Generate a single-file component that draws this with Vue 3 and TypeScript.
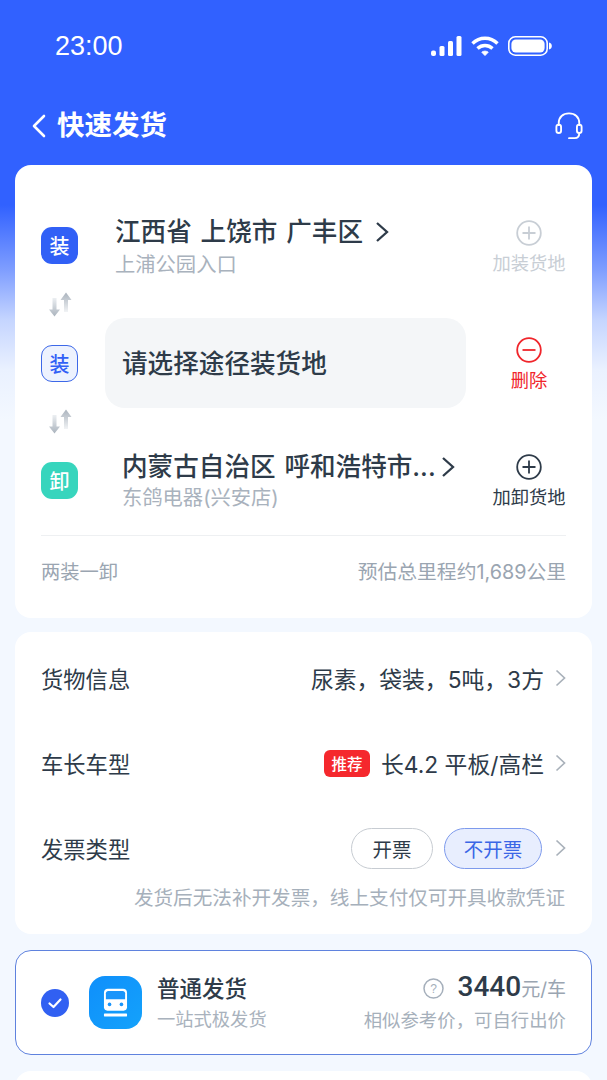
<script setup lang="ts">
interface InfoRow {
  label: string;
  value: string;
  tag?: string;
}

const infoRows: InfoRow[] = [
  { label: '货物信息', value: '尿素，袋装，5吨，3方' },
  { label: '车长车型', value: '长4.2 平板/高栏', tag: '推荐' }
];
</script>

<template>
  <div class="page">
    <div class="status-bar">
      <span class="time">23:00</span>
      <div class="status-icons">
        <svg width="31" height="20" viewBox="0 0 31 20" fill="#fff">
          <rect x="0" y="14.500" width="5" height="5.500" rx="2" />
          <rect x="8.500" y="10" width="5" height="10" rx="1.500" />
          <rect x="17" y="5" width="5" height="15" rx="1.500" />
          <rect x="25.500" y="0" width="5" height="20" rx="1.500" />
        </svg>
        <svg width="28" height="20" viewBox="0 0 28 20" fill="none" stroke="#fff" stroke-width="3.400">
          <path d="M1.500 7.500C8.500 0.500 19.500 0.500 26.500 7.500" />
          <path d="M6.500 12.500C10.800 8.500 17.200 8.500 21.500 12.500" />
          <path d="M10.800 16.200 14 19.500 17.200 16.200C15.200 14.800 12.800 14.800 10.800 16.200Z" fill="#fff" stroke-width="1" />
        </svg>
        <svg width="44" height="20" viewBox="0 0 44 20" fill="none">
          <rect x="0.800" y="0.800" width="38.400" height="18.400" rx="6.500" stroke="#fff" stroke-width="1.600" />
          <rect x="3.400" y="3.400" width="33.200" height="13.200" rx="4.500" fill="#fff" />
          <path d="M41 6.500C43 7 43.800 8.200 43.800 10S43 13 41 13.500Z" fill="#fff" />
        </svg>
      </div>
    </div>

    <div class="nav-bar">
      <div class="nav-left">
        <svg width="14" height="24" viewBox="0 0 14 24" fill="none" stroke="#fff" stroke-width="2.600" stroke-linecap="round" stroke-linejoin="round">
          <path d="M12 2 2 12 12 22" />
        </svg>
        <span class="nav-title">快速发货</span>
      </div>
      <svg width="28" height="28" viewBox="0 0 30 30" fill="none" stroke="#fff" stroke-width="2">
        <path d="M4 15V12C4 5.500 8.500 1.500 15 1.500S26 5.500 26 12V15" />
        <rect x="1.500" y="13.500" width="5" height="9" rx="2.500" />
        <rect x="23.500" y="13.500" width="5" height="9" rx="2.500" />
        <path d="M26 22.500C26 26 24.500 28 21 28H15" stroke-linecap="round" />
      </svg>
    </div>

    <section class="card route-card">
      <div class="route-row">
        <span class="badge badge-blue">装</span>
        <div class="place place-first">
          <div class="place-title">
            <span>江西省&nbsp;上饶市&nbsp;广丰区</span>
            <svg class="go" width="14" height="24" viewBox="0 0 14 24" fill="none" stroke="#2e3b49" stroke-width="2.300">
              <path d="M2 3 12 12 2 21" />
            </svg>
          </div>
          <div class="place-sub">上浦公园入口</div>
        </div>
        <div class="action action-off">
          <svg width="26" height="26" viewBox="0 0 26 26" fill="none" stroke="currentColor" stroke-width="1.800">
            <circle cx="13" cy="13" r="11.800" />
            <path d="M13 6.500V19.500M6.500 13H19.500" />
          </svg>
          <span>加装货地</span>
        </div>
      </div>

      <svg class="swap" width="26" height="27.500" viewBox="0 0 26 27.500" fill="none">
        <defs>
          <linearGradient id="swapDown" x1="0" y1="0" x2="0" y2="1">
            <stop offset="0" stop-color="#eceff2" />
            <stop offset="1" stop-color="#aab3bd" />
          </linearGradient>
          <linearGradient id="swapUp" x1="0" y1="0" x2="0" y2="1">
            <stop offset="0" stop-color="#aab3bd" />
            <stop offset="1" stop-color="#f1f3f5" />
          </linearGradient>
        </defs>
        <path d="M5.500 7H9.500V18.500H13L7.500 25.500 2 18.500H5.500Z" fill="url(#swapDown)" />
        <path d="M19 1.500 24.500 9H21V21H17V9H13.500Z" fill="url(#swapUp)" />
      </svg>

      <div class="route-row">
        <span class="badge badge-outline">装</span>
        <div class="place-box"><span>请选择途径装货地</span></div>
        <div class="action action-red">
          <svg width="26" height="26" viewBox="0 0 26 26" fill="none" stroke="currentColor" stroke-width="1.800">
            <circle cx="13" cy="13" r="11.800" />
            <path d="M6.500 13H19.500" />
          </svg>
          <span>删除</span>
        </div>
      </div>

      <svg class="swap" width="26" height="27.500" viewBox="0 0 26 27.500" fill="none">
        <path d="M5.500 7H9.500V18.500H13L7.500 25.500 2 18.500H5.500Z" fill="url(#swapDown)" />
        <path d="M19 1.500 24.500 9H21V21H17V9H13.500Z" fill="url(#swapUp)" />
      </svg>

      <div class="route-row">
        <span class="badge badge-green">卸</span>
        <div class="place">
          <div class="place-title">
            <span>内蒙古自治区&nbsp;呼和浩特市...</span>
            <svg class="go-tight" width="14" height="24" viewBox="0 0 14 24" fill="none" stroke="#2e3b49" stroke-width="2.300">
              <path d="M2 3 12 12 2 21" />
            </svg>
          </div>
          <div class="place-sub">东鸽电器(兴安店)</div>
        </div>
        <div class="action">
          <svg width="26" height="26" viewBox="0 0 26 26" fill="none" stroke="currentColor" stroke-width="1.800">
            <circle cx="13" cy="13" r="11.800" />
            <path d="M13 6.500V19.500M6.500 13H19.500" />
          </svg>
          <span>加卸货地</span>
        </div>
      </div>

      <div class="route-foot">
        <span>两装一卸</span>
        <span class="distance">预估总里程约1,689公里</span>
      </div>
    </section>

    <section class="card info-card">
      <div v-for="row in infoRows" :key="row.label" class="info-row">
        <span class="info-label">{{ row.label }}</span>
        <div class="info-value">
          <span v-if="row.tag" class="tag">{{ row.tag }}</span>
          <span>{{ row.value }}</span>
          <svg class="more" width="11" height="18" viewBox="0 0 11 18" fill="none" stroke="#a9b1ba" stroke-width="1.700">
            <path d="M1.500 1.500 9.500 9 1.500 16.500" />
          </svg>
        </div>
      </div>
      <div class="info-row">
        <span class="info-label">发票类型</span>
        <div class="info-value">
          <span class="pill">开票</span>
          <span class="pill pill-on">不开票</span>
          <svg class="more" width="11" height="18" viewBox="0 0 11 18" fill="none" stroke="#a9b1ba" stroke-width="1.700">
            <path d="M1.500 1.500 9.500 9 1.500 16.500" />
          </svg>
        </div>
      </div>
      <p class="info-hint">发货后无法补开发票，线上支付仅可开具收款凭证</p>
    </section>

    <section class="card ship-card">
      <svg class="check" width="28" height="28" viewBox="0 0 28 28">
        <circle cx="14" cy="14" r="14" fill="#3160f2" />
        <path d="M8.500 14.500 12.500 18 19.500 10.500" fill="none" stroke="#fff" stroke-width="2.200" stroke-linecap="round" stroke-linejoin="round" />
      </svg>
      <div class="ship-icon">
        <svg width="25" height="29" viewBox="0 0 26 30">
          <path d="M5 .8H21C23.300.8 25 2.500 25 4.800V20C25 22 23.500 23.500 21.500 23.500H4.500C2.500 23.500 1 22 1 20V4.800C1 2.500 2.700.8 5 .8Z" fill="#fff" />
          <path d="M5.500 3H20.500C22 3 23 4 23 5.500V11.500H3V5.500C3 4 4 3 5.500 3Z" fill="#1a95fb" />
          <circle cx="6.800" cy="17" r="1.900" fill="#1a95fb" />
          <circle cx="19.200" cy="17" r="1.900" fill="#1a95fb" />
          <rect x="1" y="26.500" width="24" height="3" rx=".5" fill="#fff" />
        </svg>
      </div>
      <div class="ship-text">
        <div class="ship-name">普通发货</div>
        <div class="ship-sub">一站式极发货</div>
      </div>
      <div class="ship-price">
        <div class="price-line">
          <svg class="help" width="21" height="21" viewBox="0 0 21 21" fill="none" stroke="#a5afbb" stroke-width="1.500">
            <circle cx="10.500" cy="10.500" r="9.500" />
            <text x="10.500" y="14.500" text-anchor="middle" font-size="12" fill="#a5afbb" stroke="none" font-family="Liberation Sans">?</text>
          </svg>
          <span class="price">3440</span>
          <span class="unit">元/车</span>
        </div>
        <div class="price-note">相似参考价，可自行出价</div>
      </div>
    </section>

    <section class="card next-card"></section>
  </div>
</template>

<style>
html,
body {
  margin: 0;
  background: #f3f8ff;
}
</style>

<style scoped>
.page {
  width: 607px;
  height: 1080px;
  overflow: hidden;
  box-sizing: border-box;
  padding: 0 15px;
  font-family: "Inter", "Noto Sans CJK SC", "Liberation Sans", sans-serif;
  color: #2e3b49;
  background: linear-gradient(180deg, #3161ff 0, #3161ff 205px, #7f9eff 270px, #c5d5ff 320px, #eaf1ff 370px, #f3f8ff 420px, #f3f8ff 100%);
}

.status-bar {
  height: 92px;
  margin: 0 40px;
  display: flex;
  align-items: center;
  justify-content: space-between;
  color: #fff;
}

.time {
  font-family: "Liberation Sans", sans-serif;
  font-size: 27px;
}

.status-icons {
  display: flex;
  align-items: center;
  gap: 9px;
}

.nav-bar {
  height: 73px;
  box-sizing: border-box;
  padding: 0 9px 6px 17px;
  display: flex;
  align-items: center;
  justify-content: space-between;
}

.nav-left {
  display: flex;
  align-items: center;
  gap: 11px;
}

.nav-title {
  font-size: 27.500px;
  font-weight: 700;
  color: #fff;
  line-height: 1;
}

.card {
  background: #fff;
  border-radius: 16px;
}

.route-card {
  height: 453px;
  box-sizing: border-box;
  padding: 35.500px 26px 0;
}

.route-row {
  height: 90px;
  display: flex;
  align-items: center;
}

.badge {
  width: 37px;
  height: 37px;
  flex: none;
  box-sizing: border-box;
  border-radius: 11px;
  display: flex;
  align-items: center;
  justify-content: center;
  font-size: 20px;
  font-weight: 500;
  color: #fff;
  margin-right: 27px;
}

.badge-blue {
  background: #3160f6;
}

.badge-outline {
  background: #edf2fe;
  border: 1px solid #3d68e8;
  color: #3160f6;
}

.badge-green {
  background: #37d5bd;
}

.place {
  flex: 1;
  min-width: 0;
  padding: 3px 0 0 17px;
}

.place-first {
  padding: 5px 0 0 10px;
}

.place-title {
  display: flex;
  align-items: center;
  font-size: 25.600px;
  font-weight: 500;
  line-height: 32px;
  word-spacing: 2px;
  white-space: nowrap;
}

.go {
  margin-left: 12px;
}

.go-tight {
  margin-left: 5px;
}

.place-sub {
  font-size: 20.300px;
  line-height: 30px;
  color: #a9b2bd;
  white-space: nowrap;
}

.place-first .place-sub {
  margin-top: 2px;
}

.place-box {
  width: 361px;
  height: 90px;
  flex: none;
  box-sizing: border-box;
  padding-left: 17px;
  border-radius: 20px;
  background: #f4f6f8;
  display: flex;
  align-items: center;
  font-size: 25.600px;
  font-weight: 500;
}

.place-box span {
  margin-bottom: 4px;
}

.action {
  width: 74px;
  flex: none;
  margin-left: auto;
  padding-top: 3px;
  display: flex;
  flex-direction: column;
  align-items: center;
  gap: 4px;
  font-size: 18.300px;
  line-height: 26px;
  white-space: nowrap;
}

.action-off {
  padding-top: 5px;
  color: #c8ced5;
}

.action-red {
  color: #f0252b;
}

.swap {
  display: block;
  margin-left: 6px;
}

.route-foot {
  margin-top: 9px;
  border-top: 1px solid #eef0f2;
  padding-top: 22px;
  display: flex;
  justify-content: space-between;
  font-size: 19.300px;
  line-height: 28px;
  color: #9aa5b1;
}

.distance {
  font-size: 19.800px;
}

.info-card {
  margin-top: 14px;
  height: 302px;
  box-sizing: border-box;
  padding: 3.500px 26px 0;
}

.info-row {
  height: 85px;
  display: flex;
  align-items: center;
  justify-content: space-between;
}

.info-label {
  font-size: 22.300px;
}

.info-value {
  display: flex;
  align-items: center;
  font-size: 22.800px;
  white-space: nowrap;
}

.more {
  margin-left: 11px;
}

.tag {
  margin-right: 11px;
  width: 46px;
  height: 27px;
  border-radius: 6px;
  background: #f5282d;
  color: #fff;
  font-size: 15.500px;
  font-weight: 500;
  display: flex;
  align-items: center;
  justify-content: center;
}

.pill {
  height: 41px;
  box-sizing: border-box;
  width: 82px;
  margin-right: 11px;
  border: 1px solid #c7ccd2;
  border-radius: 21px;
  display: flex;
  align-items: center;
  justify-content: center;
  font-size: 19.500px;
}

.pill-on {
  width: 98px;
  margin-right: 2px;
  border-color: #7d9aec;
  background: #e8eefe;
  color: #3a66e6;
}

.info-hint {
  margin: -7px 1px 0 0;
  text-align: right;
  font-size: 19.600px;
  line-height: 28px;
  color: #a6b0bb;
  white-space: nowrap;
}

.ship-card {
  margin-top: 16px;
  height: 105px;
  box-sizing: border-box;
  padding: 0 25px;
  border: 1.500px solid #5f82de;
  display: flex;
  align-items: center;
}

.check {
  flex: none;
}

.ship-icon {
  width: 53px;
  height: 53px;
  margin-left: 20px;
  border-radius: 16px;
  flex: none;
  background: linear-gradient(135deg, #0f8ffb, #14a2fb);
  display: flex;
  align-items: center;
  justify-content: center;
}

.ship-text {
  margin-left: 15px;
  padding-top: 2px;
}

.ship-name {
  font-size: 22.500px;
  font-weight: 500;
  line-height: 30px;
}

.ship-sub {
  font-size: 18.300px;
  line-height: 30px;
  color: #a9b2bd;
}

.ship-price {
  margin-left: auto;
  text-align: right;
}

.price-line {
  display: flex;
  align-items: baseline;
  justify-content: flex-end;
  line-height: 32px;
}

.help {
  align-self: center;
  margin-right: 13px;
}

.price {
  font-family: "Roboto", "Liberation Sans", sans-serif;
  font-size: 28px;
  font-weight: 500;
}

.unit {
  font-size: 19px;
  color: #9aa5b1;
}

.price-note {
  font-size: 18.400px;
  line-height: 28px;
  color: #a6b0bb;
  white-space: nowrap;
}

.next-card {
  margin-top: 16px;
  height: 60px;
}
</style>
